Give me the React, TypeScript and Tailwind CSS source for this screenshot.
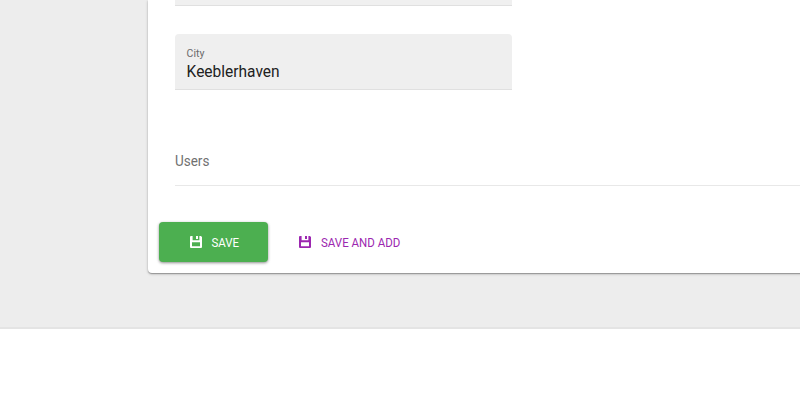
function SaveIcon() {
  return (
    <svg width="12" height="12" viewBox="0 0 12 12" fill="currentColor" fillRule="evenodd" aria-hidden="true">
      <path d="M1 0h1.6v4.2h6.8V0H10.9L12 1.1V11a1 1 0 0 1-1 1H1a1 1 0 0 1-1-1V1a1 1 0 0 1 1-1ZM2 6.2v4.1h8V6.2Z" />
      <path d="M6 0h2v3H6Z" />
    </svg>
  );
}

export default function App() {
  return (
    <div className="h-[400px] w-[800px] overflow-hidden bg-white font-['Roboto',sans-serif]">
      <main className="h-[329px] overflow-hidden border-b-2 border-[#e4e4e4] bg-[#ededed] pl-[148px]">
        <section className="flex h-[273px] w-[700px] flex-col rounded-b bg-white pl-[27px] shadow-[0_1px_1px_rgba(0,0,0,0.25),0_1px_3px_rgba(0,0,0,0.24)]">
          <div className="h-[6px] w-[337px] shrink-0 border-b border-[#e0e0e0] bg-[#f0f0f0]" />
          <div className="mt-7 h-14 w-[337px] shrink-0 rounded-t border-b border-[#e0e0e0] bg-[#efefef] pl-[11px] pt-[13px]">
            <div className="origin-left translate-x-[0.6px] scale-x-[0.955] text-[11px] leading-[13px] text-[#6b6b6b]">City</div>
            <div className="mt-[1px] origin-left translate-x-[0.6px] scale-x-[0.969] text-[16px] leading-[21px] text-[#212121]">Keeblerhaven</div>
          </div>
          <h2 className="mt-[60px] h-9 shrink-0 border-b border-[#e8e8e8] pt-px text-[14px] leading-5 text-[#707070]">
            <span className="inline-block origin-left scale-x-[0.964]">Users</span>
          </h2>
          <div className="-ml-4 mt-9 flex h-[41px] shrink-0 text-[12px]">
            <button className="flex h-[40.4px] w-[109.4px] items-center gap-[9px] rounded bg-[#4caf50] pl-[31px] text-white shadow-[0_1px_3px_rgba(0,0,0,0.45)]">
              <SaveIcon /><span className="origin-left translate-x-[0.4px] scale-x-[0.958] pt-px">SAVE</span>
            </button>
            <button className="ml-[30.6px] flex h-[40.4px] items-center gap-[10px] text-[#9c27b0]">
              <SaveIcon /><span className="origin-left scale-x-[0.958] pt-px">SAVE AND ADD</span>
            </button>
          </div>
        </section>
      </main>
    </div>
  );
}
